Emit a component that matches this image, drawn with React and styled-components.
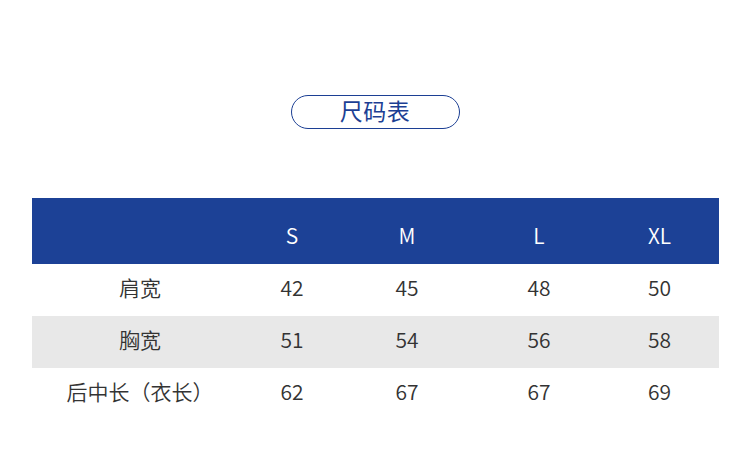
import React from "react";
import styled, { createGlobalStyle } from "styled-components";

const GlobalStyle = createGlobalStyle`
  html, body { margin: 0; padding: 0; background: #fff; }
  body { font-family: "Noto Sans CJK SC", "Noto Sans", sans-serif; }
`;

const Page = styled.div`
  width: 750px;
  height: 454px;
  padding-top: 95px;
  box-sizing: border-box;
  display: flex;
  flex-direction: column;
  align-items: center;
`;

const TitlePill = styled.div`
  width: 169px;
  height: 34px;
  box-sizing: border-box;
  border: 1.5px solid #1c3f94;
  border-radius: 17px;
  color: #1c3f94;
  font-size: 23px;
  line-height: 29px;
  text-align: center;
  letter-spacing: 0.5px;
`;

const Table = styled.div`
  margin-top: 69px;
  width: 687px;
  align-self: flex-start;
  margin-left: 32px;
  display: grid;
  grid-template-columns: 216px 88px 142px 122px 1fr;
`;

const Row = styled.div`
  display: contents;
`;

const Cell = styled.div`
  height: ${(p) => (p.$head ? "66px" : "52px")};
  display: flex;
  align-items: center;
  justify-content: center;
  padding-top: ${(p) => (p.$head ? "8px" : "0")};
  padding-bottom: ${(p) => (p.$head ? "0" : "7px")};
  box-sizing: border-box;
  background: ${(p) => (p.$head ? "#1c4196" : p.$shade ? "#e8e8e8" : "#fff")};
  color: ${(p) => (p.$head ? "#fff" : "#333")};
  font-size: 21px;
  font-weight: 350;
`;

const sizes = ["S", "M", "L", "XL"];
const rows = [
  { label: "肩宽", values: [42, 45, 48, 50] },
  { label: "胸宽", values: [51, 54, 56, 58] },
  { label: "后中长（衣长）", values: [62, 67, 67, 69] },
];

export default function App() {
  return (
    <>
      <GlobalStyle />
      <Page>
        <TitlePill>尺码表</TitlePill>
        <Table>
          <Row>
            <Cell $head />
            {sizes.map((s) => (
              <Cell $head key={s}>{s}</Cell>
            ))}
          </Row>
          {rows.map((r, i) => (
            <Row key={r.label}>
              <Cell $shade={i === 1}>{r.label}</Cell>
              {r.values.map((v, j) => (
                <Cell $shade={i === 1} key={j}>{v}</Cell>
              ))}
            </Row>
          ))}
        </Table>
      </Page>
    </>
  );
}
